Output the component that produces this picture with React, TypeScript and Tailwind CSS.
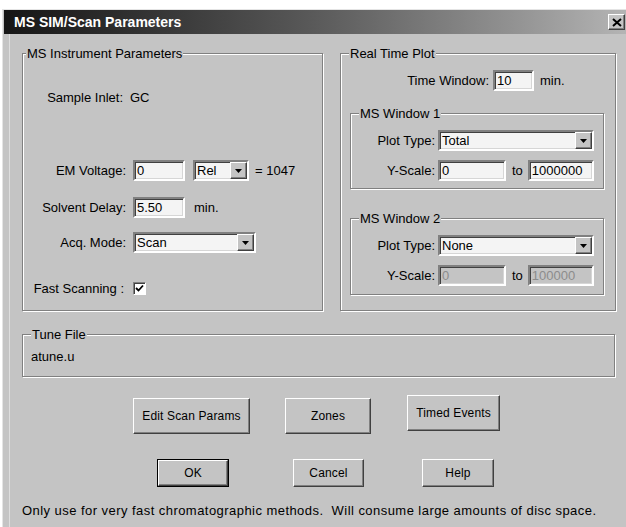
import React from "react";

const FACE = "bg-[#c4c4c4]";

function Sunken({
  className = "",
  disabled = false,
  children,
}: {
  className?: string;
  disabled?: boolean;
  children?: React.ReactNode;
}) {
  return (
    <div
      className={`h-[21px] border-2 border-t-[#808080] border-l-[#808080] border-b-white border-r-white shadow-[inset_1px_1px_0_#404040,inset_-1px_-1px_0_#d6d6d6] flex items-center pl-[2px] overflow-hidden whitespace-nowrap ${
        disabled ? "bg-[#c4c4c4] text-[#8c8c8c]" : "bg-[#f4f4f4] text-black"
      } ${className}`}
    >
      {children}
    </div>
  );
}

function DropArrow() {
  return (
    <div className="ml-auto w-[17px] h-[17px] shrink-0 bg-[#c4c4c4] border border-t-white border-l-white border-b-[#404040] border-r-[#404040] shadow-[inset_-1px_-1px_0_#808080] flex items-center justify-center">
      <svg width="7" height="4" viewBox="0 0 7 4">
        <polygon points="0,0 7,0 3.5,4" fill="#000" />
      </svg>
    </div>
  );
}

function Combo({ value, className = "" }: { value: string; className?: string }) {
  return (
    <Sunken className={className}>
      <span>{value}</span>
      <DropArrow />
    </Sunken>
  );
}

function Group({
  title,
  labelLeft = "left-[8px]",
  className = "",
  children,
}: {
  title: string;
  labelLeft?: string;
  className?: string;
  children?: React.ReactNode;
}) {
  return (
    <div
      className={`relative border border-[#808080] shadow-[inset_1px_1px_0_#fff,1px_1px_0_#fff] ${className}`}
    >
      <span className={`absolute -top-[8px] ${labelLeft} ${FACE} px-[1px] leading-[15px] whitespace-nowrap`}>
        {title}
      </span>
      {children}
    </div>
  );
}

function Button({
  label,
  className = "",
  isDefault = false,
}: {
  label: string;
  className?: string;
  isDefault?: boolean;
}) {
  const face = (
    <div className="w-full h-full border border-t-white border-l-white border-b-[#404040] border-r-[#404040] shadow-[inset_-1px_-1px_0_#808080] flex items-center justify-center whitespace-nowrap text-[12px] tracking-[0.15px]">
      {label}
    </div>
  );
  return isDefault ? (
    <div className={`border border-black ${className}`}>{face}</div>
  ) : (
    <div className={className}>{face}</div>
  );
}

export default function App() {
  return (
    <div className="w-[626px] h-[527px] overflow-hidden bg-white pt-[9px] pl-[2px] flex flex-col font-['Liberation_Sans',Arial,sans-serif] text-[13px] leading-[15px] text-black">
      <div className={`flex-1 flex flex-col ${FACE} border-l border-t border-[#e4e4e4]`}>
        {/* caption bar */}
        <div className="ml-[1px] h-[24px] flex items-start bg-gradient-to-r from-[#161616] via-[#5a5a5a] to-[#b4b4b4]">
          <span className="pl-[10px] pt-[4px] text-white font-bold text-[14px] leading-[16px]">
            MS SIM/Scan Parameters
          </span>
          <div className="ml-auto mt-[4px] mr-[1px] w-[17px] h-[16px] bg-[#c4c4c4] border border-t-white border-l-white border-b-[#404040] border-r-[#404040] shadow-[inset_-1px_-1px_0_#808080] flex items-center justify-center">
            <svg width="10" height="9" viewBox="0 0 10 9">
              <path d="M1 1 L9 8 M9 1 L1 8" stroke="#000" strokeWidth="2" />
            </svg>
          </div>
        </div>

        {/* dialog body */}
        <div className="flex-1 ml-[6px] border-l border-[#dedede] flex flex-col">
          <div className="mt-[19px] ml-[12px] flex items-start">
            {/* left column */}
            <Group title="MS Instrument Parameters" labelLeft="left-[3px]" className="w-[301px] h-[258px] flex flex-col">
              <div className="mt-[36px] flex items-center">
                <span className="w-[100px] text-right">Sample Inlet:</span>
                <span className="ml-[7px]">GC</span>
              </div>
              <div className="mt-[55px] flex items-center">
                <span className="w-[103px] text-right">EM Voltage:</span>
                <Sunken className="ml-[7px] w-[52px]">0</Sunken>
                <Combo value="Rel" className="ml-[8px] w-[56px]" />
                <span className="ml-[6px]">= 1047</span>
              </div>
              <div className="mt-[16px] flex items-center">
                <span className="w-[103px] text-right">Solvent Delay:</span>
                <Sunken className="ml-[7px] w-[52px]">5.50</Sunken>
                <span className="ml-[9px]">min.</span>
              </div>
              <div className="mt-[14px] flex items-center">
                <span className="w-[103px] text-right">Acq. Mode:</span>
                <Combo value="Scan" className="ml-[7px] w-[123px]" />
              </div>
              <div className="mt-[28px] flex items-center">
                <span className="w-[101px] text-right">Fast Scanning :</span>
                <div className="ml-[9px] w-[13px] h-[13px] bg-white border border-t-[#808080] border-l-[#808080] border-b-white border-r-white shadow-[inset_1px_1px_0_#404040] flex items-center justify-center">
                  <svg width="9" height="9" viewBox="0 0 9 9">
                    <path d="M1 4 L3.5 6.5 L8 1.5" fill="none" stroke="#000" strokeWidth="1.8" />
                  </svg>
                </div>
              </div>
            </Group>

            {/* right column */}
            <Group title="Real Time Plot" className="ml-[17px] w-[276px] h-[258px] flex flex-col">
              <div className="mt-[16px] flex items-center">
                <span className="w-[148px] text-right">Time Window:</span>
                <Sunken className="ml-[4px] w-[41px]">10</Sunken>
                <span className="ml-[6px]">min.</span>
              </div>

              <Group title="MS Window 1" className="mt-[22px] ml-[9px] w-[254px] h-[76px] flex flex-col">
                <div className="mt-[16px] flex items-center">
                  <span className="w-[84px] text-right">Plot Type:</span>
                  <Combo value="Total" className="ml-[3px] w-[156px]" />
                </div>
                <div className="mt-[9px] flex items-center">
                  <span className="w-[84px] text-right">Y-Scale:</span>
                  <Sunken className="ml-[3px] w-[68px]">0</Sunken>
                  <span className="ml-[6px]">to</span>
                  <Sunken className="ml-[5px] w-[66px]">1000000</Sunken>
                </div>
              </Group>

              <Group title="MS Window 2" className="mt-[29px] ml-[9px] w-[254px] h-[77px] flex flex-col">
                <div className="mt-[16px] flex items-center">
                  <span className="w-[84px] text-right">Plot Type:</span>
                  <Combo value="None" className="ml-[3px] w-[156px]" />
                </div>
                <div className="mt-[9px] flex items-center">
                  <span className="w-[84px] text-right">Y-Scale:</span>
                  <Sunken disabled className="ml-[3px] w-[68px]">0</Sunken>
                  <span className="ml-[6px]">to</span>
                  <Sunken disabled className="ml-[5px] w-[66px]">100000</Sunken>
                </div>
              </Group>
            </Group>
          </div>

          <Group title="Tune File" className="mt-[23px] ml-[12px] w-[593px] h-[43px] flex flex-col">
            <span className="mt-[14px] ml-[8px]">atune.u</span>
          </Group>

          <div className="mt-[18px] ml-[123px] flex items-start">
            <Button label="Edit Scan Params" className="mt-[3px] w-[117px] h-[36px]" />
            <Button label="Zones" className="mt-[3px] ml-[35px] w-[86px] h-[36px]" />
            <Button label="Timed Events" className="ml-[36px] w-[93px] h-[36px]" />
          </div>

          <div className="mt-[25px] ml-[147px] flex items-start">
            <Button label="OK" isDefault className="w-[72px] h-[28px]" />
            <Button label="Cancel" className="ml-[64px] w-[71px] h-[28px]" />
            <Button label="Help" className="ml-[58px] w-[72px] h-[28px]" />
          </div>

          <p className="mt-[16px] ml-[12px] whitespace-pre tracking-[0.45px]">
            Only use for very fast chromatographic methods.  Will consume large amounts of disc space.
          </p>
        </div>
      </div>
    </div>
  );
}
